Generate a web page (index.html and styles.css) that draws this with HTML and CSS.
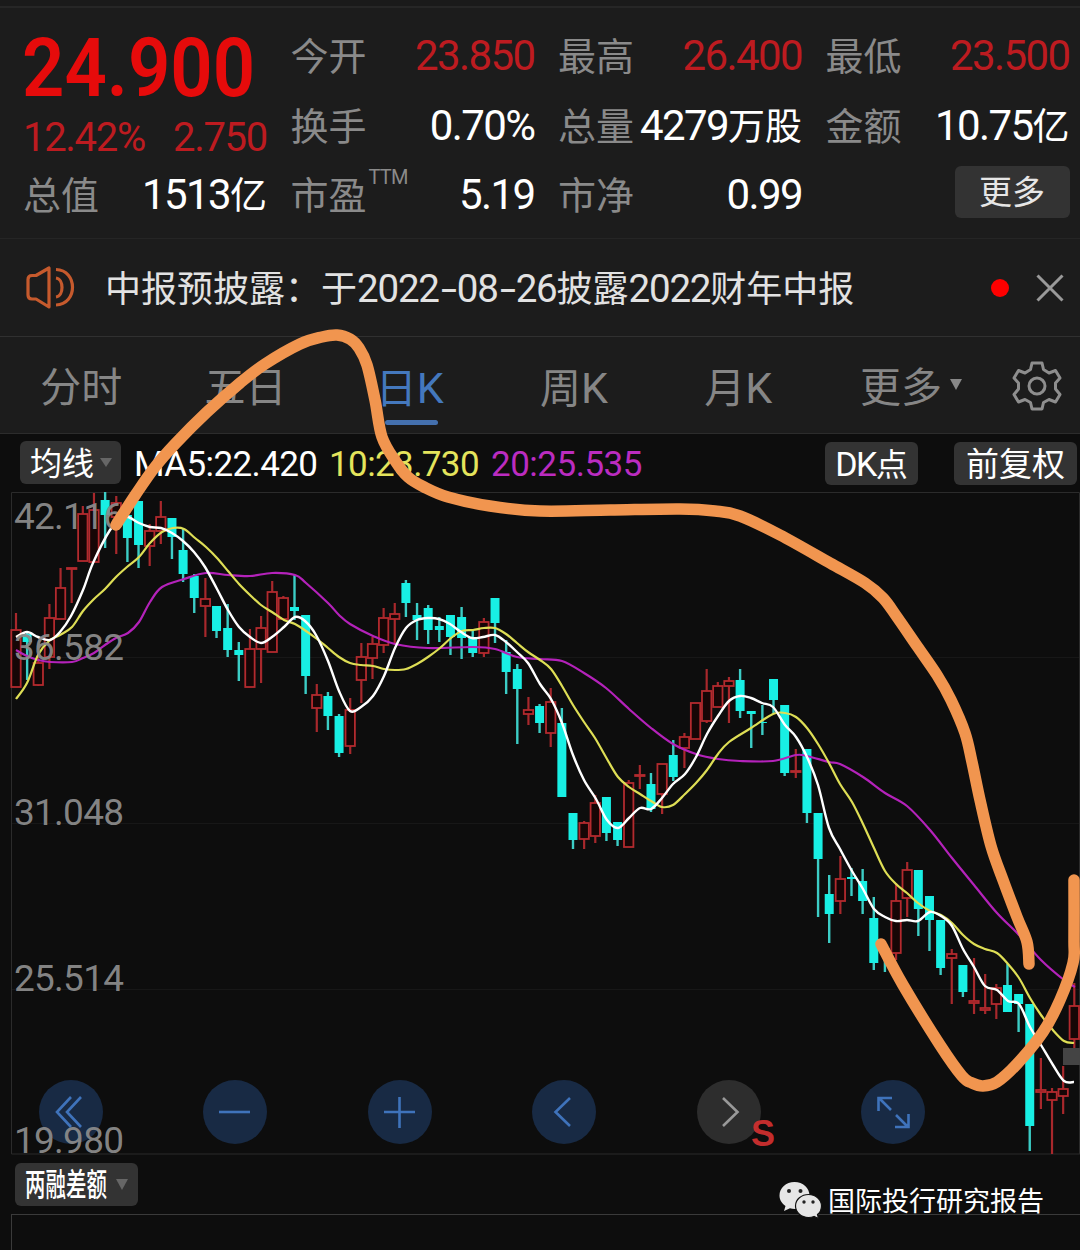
FILE: index.html
```html
<!DOCTYPE html>
<html lang="zh-CN">
<head>
    <meta charset="UTF-8">
    <meta name="viewport" content="width=device-width, initial-scale=1.0">
    <title>日K行情</title>
    <link rel="stylesheet" href="styles.css">
</head>
<body>
    <div class="app">
        <!-- 报价 -->
        <section class="quote">
            <div class="quote-col">
                <div class="price"><span>24.900</span></div>
                <div class="change"><span>12.42%</span><span>2.750</span></div>
                <div class="cell"><label>总值</label><b>1513<i>亿</i></b></div>
            </div>
            <div class="quote-col">
                <div class="cell"><label>今开</label><b class="red">23.850</b></div>
                <div class="cell"><label>换手</label><b>0.70%</b></div>
                <div class="cell"><label>市盈<sup>TTM</sup></label><b>5.19</b></div>
            </div>
            <div class="quote-col">
                <div class="cell"><label>最高</label><b class="red">26.400</b></div>
                <div class="cell"><label>总量</label><b>4279<i>万股</i></b></div>
                <div class="cell"><label>市净</label><b>0.99</b></div>
            </div>
            <div class="quote-col">
                <div class="cell"><label>最低</label><b class="red">23.500</b></div>
                <div class="cell"><label>金额</label><b>10.75<i>亿</i></b></div>
                <div class="more-btn">更多</div>
            </div>
        </section>

        <!-- 公告 -->
        <section class="notice">
            <svg class="speaker" width="52" height="44" viewBox="0 0 52 44">
                <path d="M7 9.500H11L24 2V41L11 33H7Q3 33 3 29V13.500Q3 9.500 7 9.500Z"/>
                <path d="M31 12C39 13 39 30 31 31"/>
                <path d="M31 3.500C53 4 53 38.500 31 39"/>
            </svg>
            <p>中报预披露：于<span class="num">2022<em>-</em>08<em>-</em>26</span>披露<span class="num">2022</span>财年中报</p>
            <span class="dot"></span>
            <svg class="close" width="28" height="28" viewBox="0 0 28 28"><path d="M1.500 1.500L26.500 26.500M26.500 1.500L1.500 26.500"/></svg>
        </section>

        <!-- 周期 -->
        <nav class="tabs">
            <div class="tab">分时</div>
            <div class="tab">五日</div>
            <div class="tab active">日<span>K</span></div>
            <div class="tab">周<span>K</span></div>
            <div class="tab">月<span>K</span></div>
            <div class="tab tab-more">更多<i class="arrow"></i></div>
            <svg class="gear" width="50" height="50" viewBox="0 0 50 50">
                <path d="M20 2H30L31.500 8.500L37 12L43.500 9.500L48 17L43.500 22V28L48 33.500L43.500 41L37 38.500L31.500 41.500L30 48H20L18.500 41.500L13 38.500L6.500 41L2 33.500L6.500 28V22L2 17L6.500 9.500L13 12L18.500 8.500Z"/>
                <circle cx="25" cy="25" r="8"/>
            </svg>
        </nav>

        <!-- 均线 -->
        <section class="ma-bar">
            <div class="pill pill-ma">均线<i class="arrow"></i></div>
            <span class="ma ma5">MA5:22.420</span>
            <span class="ma ma10">10:23.730</span>
            <span class="ma ma20">20:25.535</span>
            <div class="pill pill-dk"><span>DK</span>点</div>
            <div class="pill pill-fq">前复权</div>
        </section>

        <!-- K线图 -->
        <section class="chart">
            <svg class="chart-svg" width="1080" height="666" viewBox="0 490 1080 666">
                <g class="grid">
                    <path d="M11.500 1154V492.500H1079.500V1154"/>
                    <path d="M11.500 1154H1080"/>
                    <path class="faint" d="M12 657.500H1079M12 823.500H1079M12 989.500H1079"/>
                </g>
                <g id="candles"></g>
                <path id="ma20" class="line line20"/>
                <path id="ma10" class="line line10"/>
                <path id="ma5" class="line line5"/>
                <rect class="price-tag" x="1063" y="1048" width="17" height="17"/>
            </svg>
            <div class="tools">
                <svg viewBox="0 0 64 64"><circle cx="32" cy="32" r="32"/><path d="M32 17L18 32L32 47M42 17L28 32L42 47"/></svg>
                <svg viewBox="0 0 64 64"><circle cx="32" cy="32" r="32"/><path d="M16 32H47"/></svg>
                <svg viewBox="0 0 64 64"><circle cx="32" cy="32" r="32"/><path d="M16 32H47M31.500 17V48"/></svg>
                <svg viewBox="0 0 64 64"><circle cx="32" cy="32" r="32"/><path d="M38 18L23.500 32L38 46"/></svg>
                <svg class="off" viewBox="0 0 64 64"><circle cx="32" cy="32" r="32"/><path d="M26 18L40.500 32L26 46"/></svg>
                <svg viewBox="0 0 64 64"><circle cx="32" cy="32" r="32"/><path d="M17.500 31V18H31M18 18L30 30M47.500 34V47H34M47 47L35 35"/></svg>
            </div>
            <svg class="chart-svg scale" width="1080" height="676" viewBox="0 490 1080 676">
                <text x="14" y="529" textLength="110">42.116</text>
                <text x="14" y="660" textLength="110">36.582</text>
                <text x="14" y="825" textLength="110">31.048</text>
                <text x="14" y="991" textLength="110">25.514</text>
                <text x="14" y="1153" textLength="110">19.980</text>
                <text class="sell" x="751" y="1146">S</text>
            </svg>
        </section>

        <!-- 副图 -->
        <section class="sub-bar">
            <div class="pill pill-sub"><span>两融差额</span><i class="arrow"></i></div>
            <div class="watermark">
                <svg width="44" height="38" viewBox="0 0 44 38">
                    <path class="bubble" d="M15.500 1C7 1 .500 7 .500 14.500C.500 19 3 22.500 6.500 25L5 30L11 27.200Q13 28 16 28C24 28 30.500 22 30.500 14.500S24 1 15.500 1Z"/>
                    <circle cx="10" cy="10" r="2"/><circle cx="21.500" cy="10" r="2"/>
                    <path class="bubble front" d="M29.500 13.500C22.500 13.500 16.500 18.500 16.500 25S22.500 36.500 29.500 36.500Q32.500 36.500 35 35.500L39.500 37.500L38.500 33.500C41 31.500 42.500 28.500 42.500 25C42.500 18.500 36.500 13.500 29.500 13.500Z"/>
                    <circle cx="25" cy="21" r="1.700"/><circle cx="34" cy="21" r="1.700"/>
                </svg>
                <span>国际投行研究报告</span>
            </div>
        </section>
        <section class="sub-chart"></section>

        <!-- 手绘标记 -->
        <svg class="marker" width="1080" height="1250" viewBox="0 0 1080 1250">
            <path id="markTop"/>
            <path id="markBottom"/>
        </svg>
    </div>

    <script src="chart.js"></script>
</body>
</html>
```

FILE: styles.css
```css
* {
    margin: 0;
    padding: 0;
    box-sizing: border-box;
}

body {
    background: #0d0d0d;
    font-family: Roboto, 'Noto Sans CJK SC', sans-serif;
    color: #fff;
}

i, em {
    font-style: normal;
}

.app {
    position: relative;
    width: 1080px;
    height: 1250px;
    overflow: hidden;
    background: #0d0d0d;
}

/* 报价 */
.quote {
    display: flex;
    gap: 24.5px;
    height: 239px;
    padding: 14px 0 0 23px;
    background: #1c1c1c;
    border-bottom: 1px solid #252525;
    box-shadow: inset 0 6px #1a1a1a, inset 0 8px #262626;
}

.quote-col {
    width: 243px;
    flex: none;
}

.price {
    height: 97px;
    line-height: 108px;
    font-size: 82px;
    font-weight: 600;
    color: #e60b0b;
}

.price span {
    display: inline-block;
    transform: scaleX(.905);
    transform-origin: left;
    margin-left: -1px;
}

.change {
    display: flex;
    justify-content: space-between;
    height: 42px;
    line-height: 53px;
    font-size: 40px;
    letter-spacing: -1.3px;
    margin-right: -1px;
    color: #bd1b20;
}

.cell {
    display: flex;
    justify-content: space-between;
    align-items: baseline;
    height: 69.5px;
    line-height: 84px;
    white-space: nowrap;
}

.cell label {
    position: relative;
    font-size: 38px;
    color: #8a8a8a;
}

.cell b {
    font-size: 42px;
    font-weight: 400;
    letter-spacing: -1.6px;
    margin-right: -1px;
}

.cell b i {
    font-size: 37px;
    letter-spacing: 0;
}

.cell .red {
    color: #bd1b20;
}

.cell sup {
    position: absolute;
    left: 78px;
    top: 7px;
    font-size: 20px;
    letter-spacing: -.8px;
    line-height: 32px;
}

.more-btn {
    width: 115px;
    height: 52px;
    margin: 13px 0 0 129px;
    border-radius: 6px;
    background: #333;
    color: #e6e6e6;
    font-size: 33px;
    line-height: 54px;
    text-align: center;
}

/* 公告 */
.notice {
    display: flex;
    align-items: center;
    height: 98px;
    padding: 0 16px 0 25px;
    background: #1c1c1c;
    border-bottom: 1px solid #303030;
}

.speaker {
    fill: none;
    stroke: #c65a2d;
    stroke-width: 3.2;
    stroke-linejoin: round;
}

.notice p {
    flex: 1;
    padding-left: 28px;
    margin-top: -3px;
    font-size: 36px;
    color: #e2e2e2;
    white-space: nowrap;
}

.notice .num {
    font-size: 38.5px;
    letter-spacing: -1.2px;
}

.notice em {
    display: inline-block;
    width: 18px;
    text-align: center;
    transform: scaleX(1.5);
}

.dot {
    width: 18px;
    height: 18px;
    margin-right: 27px;
    border-radius: 50%;
    background: #fe0000;
}

.close {
    fill: none;
    stroke: #999;
    stroke-width: 3;
}

/* 周期 */
.tabs {
    display: flex;
    height: 97px;
    background: #1c1c1c;
    border-bottom: 1px solid #2c2c2c;
    font-size: 41px;
    line-height: 103px;
    color: #868686;
}

.tab {
    position: relative;
    left: -1px;
    width: 164.3px;
    text-align: center;
}

.tab span {
    font-size: 43px;
}

.tab.active {
    color: #4478bd;
}

.tab.active::after {
    content: '';
    position: absolute;
    left: 57px;
    bottom: 8px;
    width: 53px;
    height: 5px;
    border-radius: 3px;
    background: #4470ae;
}

.arrow {
    display: inline-block;
    border: 6.5px solid transparent;
    border-top: 11px solid #888;
    border-bottom: 0;
}

.tab-more {
    width: 181px;
}

.tab-more .arrow {
    margin-left: 8px;
    vertical-align: 12px;
}

.gear {
    margin: 24px 0 0 10px;
    fill: none;
    stroke: #8e8e8e;
    stroke-width: 3;
    stroke-linejoin: round;
}

/* 均线 */
.ma-bar {
    display: flex;
    align-items: flex-start;
    height: 56px;
    padding: 7px 3px 0 20px;
    white-space: nowrap;
}

.pill {
    height: 43px;
    border-radius: 6px;
    background: #333;
    font-size: 32px;
    line-height: 46px;
    white-space: nowrap;
}

.pill .arrow {
    border-width: 9px 6px 0;
    border-top-color: #666;
}

.pill-ma {
    width: 101px;
    padding-left: 10px;
}

.pill-ma .arrow {
    margin-left: 6px;
    vertical-align: 8px;
}

.ma {
    font-size: 35px;
    line-height: 47px;
}

.ma5 {
    width: 195px;
    margin-left: 13px;
    letter-spacing: -.6px;
}

.ma10 {
    width: 162px;
    letter-spacing: -.6px;
    color: #e4e45c;
}

.ma20 {
    letter-spacing: -.5px;
    color: #bb2cc0;
}

.pill-dk {
    width: 93px;
    margin-left: auto;
    text-align: center;
    margin-top: 1px;
    line-height: 44px;
}

.pill-dk span {
    font-size: 34px;
    letter-spacing: -1.5px;
}

.pill-fq {
    width: 123px;
    margin: 1px 0 0 36px;
    font-size: 33px;
    line-height: 45px;
    text-align: center;
}

/* K线图 */
.chart {
    position: relative;
    height: 666px;
}

.chart-svg {
    position: absolute;
    left: 0;
    top: 0;
}

.grid path {
    fill: none;
    stroke: #2b2b2b;
}

.grid .faint {
    stroke: #171717;
}

.up {
    fill: #160606;
    stroke: #b32a2e;
    stroke-width: 1.8;
}

.down {
    fill: #18efe4;
}

.wick-up {
    stroke: #a8282c;
    stroke-width: 2.2;
}

.wick-down {
    stroke: #3ccdc6;
    stroke-width: 2.4;
}

.line {
    fill: none;
    stroke-width: 2.2;
    stroke-linejoin: round;
}

.line5 {
    stroke: #fff;
    stroke-width: 2.4;
}

.line10 {
    stroke: #dede55;
}

.line20 {
    stroke: #b422ba;
}

.price-tag {
    fill: #444;
}

.tools {
    position: absolute;
    left: 39px;
    top: 590px;
    width: 886px;
    display: flex;
    justify-content: space-between;
}

.tools svg {
    width: 64px;
    height: 64px;
    fill: none;
    stroke: #3f73bb;
    stroke-width: 2.6;
}

.tools circle {
    fill: #182a44;
    stroke: none;
}

.tools .off {
    stroke: #999;
}

.tools .off circle {
    fill: #2d2d2d;
}

.scale {
    overflow: visible;
}

.scale text {
    font-size: 37px;
    fill: #8b8b8b;
    fill-opacity: .95;
}

.scale .sell {
    font-family: 'Liberation Sans', sans-serif;
    font-size: 36px;
    font-weight: 700;
    fill: #d03030;
}

/* 副图 */
.sub-bar {
    position: relative;
    height: 58px;
    padding: 7px 0 0 15px;
}

.pill-sub {
    display: flex;
    align-items: center;
    width: 123px;
    padding-left: 10px;
}

.pill-sub span {
    width: 91px;
    font-weight: 500;
    transform: scaleX(.64);
    transform-origin: left;
}

.pill-sub .arrow {
    flex: none;
    border-top-width: 11px;
}

.watermark {
    position: absolute;
    left: 779px;
    top: 24px;
    z-index: 2;
    display: flex;
    align-items: center;
    font-size: 27px;
    white-space: nowrap;
}

.watermark svg {
    margin-right: 5px;
}

.bubble {
    fill: #e6e6e6;
}

.front {
    stroke: #111;
    stroke-width: 1.2;
}

.watermark circle {
    fill: #222;
}

.sub-chart {
    height: 36px;
    margin-left: 11px;
    border-top: 1px solid #3a3a3a;
    border-left: 1px solid #3a3a3a;
}

/* 手绘标记 */
.marker {
    position: absolute;
    left: 0;
    top: 0;
    fill: none;
    stroke: #f1954f;
    stroke-width: 11.5;
    stroke-linecap: round;
    stroke-linejoin: round;
    pointer-events: none;
}
```

FILE: chart.js
```js
// [涨跌, 最高, 实体上沿, 实体下沿, 最低]
const candles = [
    [1, 613, 630, 687, 687], [0, 632, 634, 642, 680], [1, 657, 663, 685, 686], [1, 604, 618, 657, 669],
    [1, 568, 588, 619, 619], [1, 568, 568, 569, 603], [1, 506, 514, 561, 561], [1, 493, 510, 562, 562],
    [0, 492, 500, 515, 548], [1, 496, 503, 517, 554], [0, 513, 515, 538, 562], [0, 501, 501, 545, 568],
    [1, 524, 531, 546, 566], [1, 501, 517, 531, 544], [0, 518, 518, 537, 559], [0, 529, 550, 574, 582],
    [0, 574, 576, 598, 613], [1, 578, 599, 606, 637], [0, 606, 606, 631, 638], [0, 604, 628, 650, 657],
    [0, 642, 650, 655, 681], [1, 629, 649, 687, 687], [1, 616, 628, 649, 683], [1, 581, 592, 652, 652],
    [1, 596, 598, 619, 619], [0, 575, 607, 611, 620], [0, 615, 615, 676, 694], [1, 684, 695, 708, 732],
    [0, 692, 696, 716, 730], [0, 714, 716, 753, 757], [1, 698, 710, 746, 754], [1, 643, 657, 680, 703],
    [1, 637, 644, 658, 679], [1, 608, 618, 645, 653], [1, 603, 614, 619, 645], [0, 580, 583, 603, 617],
    [0, 603, 615, 620, 640], [0, 605, 608, 630, 644], [0, 617, 626, 630, 642], [0, 615, 615, 637, 655],
    [0, 607, 617, 638, 659], [0, 629, 638, 653, 657], [1, 618, 622, 653, 657], [0, 598, 598, 623, 643],
    [0, 640, 652, 672, 694], [0, 664, 669, 689, 744], [1, 697, 710, 714, 725], [0, 704, 706, 723, 733],
    [1, 688, 702, 733, 747], [0, 708, 723, 797, 797], [0, 813, 813, 840, 849], [1, 821, 823, 839, 849],
    [1, 795, 803, 836, 843], [0, 797, 797, 833, 841], [0, 822, 822, 840, 846], [1, 780, 783, 847, 847],
    [1, 765, 775, 776, 789], [0, 773, 784, 809, 812], [1, 764, 764, 794, 814], [0, 740, 755, 777, 781],
    [1, 733, 737, 748, 768], [1, 703, 703, 739, 739], [1, 669, 691, 721, 723], [1, 682, 686, 707, 707],
    [1, 677, 681, 686, 723], [0, 669, 680, 711, 718], [0, 711, 711, 714, 748], [0, 705, 722, 723, 735],
    [0, 679, 679, 700, 713], [0, 705, 705, 773, 776], [1, 749, 771, 772, 778], [0, 749, 749, 813, 823],
    [0, 813, 813, 859, 917], [0, 875, 894, 914, 943], [1, 856, 879, 901, 914], [0, 868, 877, 879, 896],
    [0, 869, 881, 901, 914], [0, 897, 918, 963, 970], [0, 945, 948, 952, 972], [1, 883, 901, 953, 960],
    [1, 862, 870, 898, 917], [0, 870, 870, 909, 936], [0, 896, 896, 920, 951], [0, 920, 920, 968, 975],
    [1, 949, 954, 958, 1004], [0, 965, 965, 992, 997], [1, 958, 1001, 1003, 1014], [1, 974, 1008, 1010, 1014],
    [1, 984, 988, 1004, 1019], [0, 964, 985, 1012, 1012], [0, 994, 994, 1004, 1032], [0, 1004, 1004, 1126, 1151],
    [1, 1058, 1090, 1092, 1109], [1, 1088, 1092, 1100, 1154], [1, 1066, 1089, 1096, 1114], [1, 983, 1006, 1039, 1048]
];

const lines = {
    ma5: '16,637 27,632 38,637 50,640 60,632 71,616 83,590 93,563 110,530 121,519 128,517 139,523 150,527 161,528 172,533 183,541 194,552 205,567 217,589 228,610 239,627 250,637 261,643 272,637 284,627 295,617 305,621 316,635 328,661 339,691 350,711 361,707 373,696 384,676 395,648 406,628 417,620 428,618 439,619 450,624 461,632 472,638 483,637 495,635 506,642 517,652 528,663 540,684 551,699 562,723 573,755 584,780 596,799 607,820 618,828 629,818 640,808 651,809 662,798 673,784 685,774 696,757 707,734 718,716 729,701 740,696 751,698 762,703 773,707 785,725 796,737 807,757 818,785 829,828 840,849 852,871 863,889 874,909 885,917 896,921 907,920 918,921 930,912 941,916 952,926 963,949 974,967 985,986 997,990 1008,1001 1019,1004 1030,1027 1041,1045 1053,1065 1064,1081 1074,1082',
    ma10: '16,699 27,683 38,655 49,641 60,635 72,627 83,611 94,599 105,589 116,577 127,567 139,557 150,543 162,532 173,528 184,529 195,538 206,547 217,558 228,571 239,584 250,595 261,605 272,612 284,620 295,624 306,631 317,639 328,648 339,657 350,663 361,665 373,666 384,669 395,670 406,669 417,664 428,657 440,648 451,638 462,631 473,630 484,628 495,628 506,634 517,643 528,652 540,660 551,669 562,686 573,705 584,722 595,738 607,759 618,777 629,787 640,794 651,801 662,807 673,805 685,794 696,783 707,770 718,754 729,742 751,728 773,714 785,713 796,717 807,728 818,744 829,763 840,784 852,802 863,824 874,848 885,871 896,884 907,893 918,903 930,911 941,915 952,923 963,935 974,944 985,949 997,953 1008,964 1019,978 1030,998 1041,1015 1052,1029 1064,1041 1074,1043',
    ma20: '16,650 27,656 38,660 50,662 72,662 83,658 94,653 105,645 116,638 128,633 139,622 150,602 162,587 184,579 206,573 228,575 250,576 272,573 295,575 306,583 328,603 339,615 350,624 373,636 395,644 428,648 473,647 495,649 517,657 540,659 562,661 584,673 606,688 629,709 651,728 673,744 696,754 718,759 740,761 773,761 796,755 807,756 829,762 840,764 863,777 885,793 907,806 930,830 952,858 974,885 997,913 1019,935 1041,960 1064,980 1075,987',
    markTop: '116,525 136,494 155,467 176,443 207,412 240,383 265,364 300,344 322,337 337,335 350,339 359,348 367,365 375,400 382,437 396,462 408,477 424,487 448,497 490,506 540,511 610,510 680,509 715,511 740,516 780,535 830,563 865,583 883,598 897,617 917,646 937,675 951,700 965,733 972,762 980,800 991,846 1003,880 1017,917 1027,942 1029,964',
    markBottom: '881,944 903,985 940,1045 962,1076 972,1083 983,1086 997,1082 1017,1064 1043,1032 1060,1000 1073,963 1074,940 1074,880'
};

const START = 16;
const STEP = 11.14;

function add(parent, name, attrs) {
    const el = document.createElementNS('http://www.w3.org/2000/svg', name);
    for (const key in attrs) el.setAttribute(key, attrs[key]);
    parent.appendChild(el);
}

function drawCandles() {
    const group = document.getElementById('candles');
    candles.forEach(([up, high, top, bottom, low], i) => {
        const x = START + i * STEP;
        const wick = up ? 'wick-up' : 'wick-down';
        if (high < top) add(group, 'line', { class: wick, x1: x, x2: x, y1: high, y2: top });
        if (low > bottom) add(group, 'line', { class: wick, x1: x, x2: x, y1: bottom, y2: low });
        const w = up ? 9.4 : 9;
        add(group, 'rect', { class: up ? 'up' : 'down', x: x - w / 2, y: top, width: w, height: bottom - top });
    });
}

// 平滑曲线
function smooth(text) {
    const pts = text.split(' ').map(p => p.split(',').map(Number));
    let d = 'M' + pts[0];
    for (let i = 0; i < pts.length - 1; i++) {
        const a = pts[i - 1] || pts[i];
        const b = pts[i];
        const c = pts[i + 1];
        const e = pts[i + 2] || c;
        d += 'C' + [
            b[0] + (c[0] - a[0]) / 6, b[1] + (c[1] - a[1]) / 6,
            c[0] - (e[0] - b[0]) / 6, c[1] - (e[1] - b[1]) / 6,
            c[0], c[1]
        ];
    }
    return d;
}

drawCandles();
for (const id in lines) {
    document.getElementById(id).setAttribute('d', smooth(lines[id]));
}
```
